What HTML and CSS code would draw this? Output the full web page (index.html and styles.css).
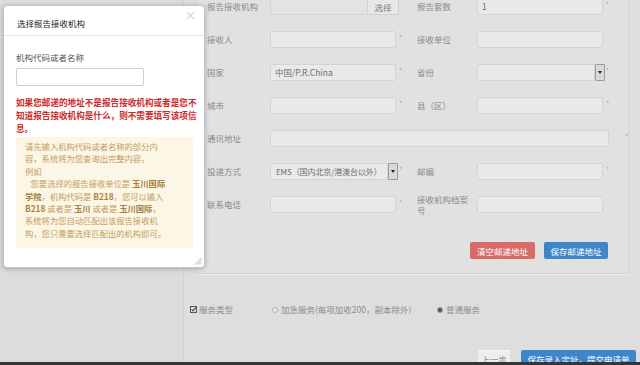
FILE: index.html
```html
<!DOCTYPE html>
<html lang="zh-CN">
<head>
  <meta charset="UTF-8">
  <meta name="viewport" content="width=device-width, initial-scale=1.0">
  <title>邮递地址</title>
  <link rel="stylesheet" href="styles.css">
</head>
<body>
  <div class="page">
    <div class="sidebar"></div>
    <div class="content">
      <div class="panel">
        <div class="form-grid">
          <label class="label">报告接收机构</label>
          <div class="input-group">
            <div class="input disabled"></div>
            <button class="btn-pick" type="button">选择</button>
          </div>
          <span class="star"></span>
          <label class="label">报告套数</label>
          <div class="input">1</div>
          <span class="star red">*</span>

          <label class="label">接收人</label>
          <div class="input"></div>
          <span class="star">*</span>
          <label class="label">接收单位</label>
          <div class="input"></div>
          <span class="star"></span>

          <label class="label">国家</label>
          <div class="input">中国/P.R.China</div>
          <span class="star">*</span>
          <label class="label">省份</label>
          <div class="select wide">
            <div class="select-text"></div>
            <span class="caret"></span>
          </div>
          <span class="star red">*</span>

          <label class="label">城市</label>
          <div class="input"></div>
          <span class="star">*</span>
          <label class="label">县（区）</label>
          <div class="input"></div>
          <span class="star">*</span>

          <label class="label">通讯地址</label>
          <div class="address">
            <div class="input long"></div>
            <span class="star">*</span>
          </div>

          <label class="label">投递方式</label>
          <div class="select">
            <div class="select-text small">EMS（国内北京/港澳台以外）</div>
            <span class="caret"></span>
          </div>
          <span class="star">*</span>
          <label class="label">邮编</label>
          <div class="input"></div>
          <span class="star">*</span>

          <label class="label">联系电话</label>
          <div class="input"></div>
          <span class="star">*</span>
          <label class="label narrow">接收机构档案号</label>
          <div class="input"></div>
          <span class="star"></span>
        </div>
        <div class="panel-actions">
          <button class="btn btn-danger" type="button">清空邮递地址</button>
          <button class="btn btn-primary" type="button">保存邮递地址</button>
        </div>
      </div>

      <div class="service-row">
        <div class="service-label">
          <svg class="check-icon" width="7" height="7" viewBox="0 0 7 7">
            <rect x="0.5" y="0.5" width="6" height="6" fill="none" stroke="#555" stroke-width="1"/>
            <path d="M1.6 3.4 L3 4.8 L6.6 1" fill="none" stroke="#555" stroke-width="1.2"/>
          </svg>
          服务类型
        </div>
        <div class="radio-option first">
          <span class="radio"></span>
          加急服务(每项加收200，副本除外)
        </div>
        <div class="radio-option">
          <span class="radio checked"></span>
          普通服务
        </div>
      </div>

      <div class="steps">
        <button class="btn btn-light" type="button">上一步</button>
        <button class="btn btn-primary btn-submit" type="button">保存录入定址，提交申请单</button>
      </div>
    </div>
  </div>

  <div class="footer-bar"></div>

  <div class="modal">
    <div class="modal-header">
      <h3>选择报告接收机构</h3>
      <span class="close">×</span>
    </div>
    <div class="modal-body">
      <p class="field-label">机构代码或者名称</p>
      <div class="modal-input"></div>
      <p class="warning">如果您邮递的地址不是报告接收机构或者是您不<br>知道报告接收机构是什么，则不需要填写该项信<br>息。</p>
      <div class="hint">
        请先输入机构代码或者名称的部分内<br>
        容，系统将为您查询出完整内容。<br>
        例如<br>
        &nbsp;&nbsp;&nbsp;您要选择的报告接收单位是 <b>玉川国际</b><br>
        <b>学院</b>，机构代码是 <b>B218</b>，您可以输入<br>
        <b>B218</b> 或者是 <b>玉川</b> 或者是 <b>玉川国际</b>，<br>
        系统将为您自动匹配出该报告接收机<br>
        构，您只需要选择匹配出的机构即可。
      </div>
    </div>
    <svg class="resize" width="8" height="8" viewBox="0 0 8 8">
      <path d="M7.5 1 L1 7.5 M7.5 3.5 L3.5 7.5 M7.5 6 L6 7.5" stroke="#999" stroke-width="0.8"/>
    </svg>
  </div>
</body>
</html>
```

FILE: styles.css
```css
* {
  margin: 0;
  padding: 0;
  box-sizing: border-box;
}

body {
  width: 640px;
  height: 365px;
  overflow: hidden;
  background: #dcdcdc;
  font-family: "Noto Sans CJK SC", "Noto Sans", sans-serif;
  font-size: 8.5px;
  color: #8a8a8a;
}

button {
  font-family: inherit;
  font-size: 8.5px;
  border: none;
}

.page {
  display: flex;
  height: 362px;
}

.sidebar {
  width: 183px;
  flex-shrink: 0;
}

.content {
  flex: 1;
  border-left: 1px solid #d2d2d2;
  background: #dedede;
  display: flex;
  flex-direction: column;
}

/* address panel */
.panel {
  margin: -10px 0 0 11px;
  width: 434px;
  background: #e1e1e1;
  border: 1px solid #d3d3d3;
  border-top: none;
  box-shadow: 0 1px 0 #ebebeb;
  padding: 0 0 14px 11px;
}

.form-grid {
  display: grid;
  grid-template-columns: 63px 126px 21px 60px 126px 1fr;
  grid-auto-rows: 33px;
  align-items: center;
}

.label {
  line-height: 11px;
}

.label.narrow {
  max-width: 56px;
}

.input {
  height: 17px;
  background: #e9e9e9;
  border: 1px solid #d4d4d4;
  border-radius: 2px;
  padding: 0 4px;
  line-height: 15px;
  color: #6f6f6f;
}

.input.disabled {
  flex: 1;
  background: #e3e3e3;
  border-radius: 2px 0 0 2px;
}

.input.long {
  width: 339px;
}

.input-group {
  display: flex;
  width: 129px;
}

.btn-pick {
  width: 31px;
  height: 17px;
  background: #e7e7e7;
  border: 1px solid #d0d0d0;
  border-left: none;
  color: #7d7d7d;
}

.address {
  grid-column: 2 / -1;
  display: flex;
  align-items: center;
}

.address .star {
  margin-left: 13px;
}

.star {
  padding-left: 3px;
  font-size: 7px;
  color: #a9a9a9;
  margin-bottom: 5px;
}

.star.red {
  color: #e08a9a;
}

.select {
  display: flex;
  align-items: center;
  width: 128px;
}

.select-text {
  flex: 1;
  height: 17px;
  background: #e9e9e9;
  border: 1px solid #d4d4d4;
  border-radius: 2px 0 0 2px;
  padding-left: 5px;
  line-height: 15px;
  color: #6f6f6f;
  white-space: nowrap;
}

.select-text.small {
  font-size: 8px;
  letter-spacing: -0.1px;
}

.caret {
  width: 10px;
  height: 17px;
  background: #dadada;
  border: 1px solid #9a9a9a;
  border-radius: 1px;
  display: flex;
  align-items: center;
  justify-content: center;
}

.caret::after {
  content: "";
  border-left: 2.5px solid transparent;
  border-right: 2.5px solid transparent;
  border-top: 3px solid #222;
}

.panel-actions {
  display: flex;
  justify-content: flex-end;
  gap: 9px;
  margin-top: 21px;
  padding-right: 20px;
}

.btn {
  height: 17px;
  color: #fff;
  border-radius: 2px;
}

.btn-danger {
  width: 65px;
  background: #d86b68;
}

.btn-primary {
  width: 64px;
  background: #3e86c9;
}

/* service type */
.service-row {
  display: flex;
  align-items: center;
  height: 18px;
  margin-top: 29px;
  padding-left: 6px;
  color: #8c8c8c;
}

.service-label {
  width: 82px;
  display: flex;
  align-items: center;
  gap: 1px;
}

.check-icon {
  margin-right: 1px;
}

.radio-option {
  display: flex;
  align-items: center;
  gap: 3px;
}

.radio-option.first {
  width: 165px;
}

.radio {
  width: 6px;
  height: 6px;
  border: 1px solid #b0b0b0;
  border-radius: 50%;
  background: #eee;
  margin-top: 2px;
}

.radio.checked {
  background: #555;
  border-color: #999;
}

.steps {
  display: flex;
  justify-content: flex-end;
  gap: 11px;
  margin-top: 35px;
  padding-right: 4px;
}

.btn-light {
  width: 32px;
  height: 17px;
  background: #eeeeee;
  color: #8a8a8a;
  border-top: 1px solid #f8f8f8;
}

.btn-submit {
  width: 115px;
  height: 17px;
}

.footer-bar {
  position: fixed;
  left: 0;
  right: 0;
  bottom: 0;
  height: 3px;
  background: #363636;
}

/* modal */
.modal {
  position: absolute;
  left: 3px;
  top: 5px;
  width: 202px;
  height: 263px;
  background: #fff;
  border: 1px solid #c4c4c4;
  border-radius: 4px;
  box-shadow: 0 1px 5px rgba(0, 0, 0, 0.25);
}

.modal-header {
  height: 30px;
  border-bottom: 1px solid #e6e6e6;
  padding: 5px 8px 0 13px;
  display: flex;
  align-items: center;
  justify-content: space-between;
}

.modal-header h3 {
  font-size: 8.5px;
  font-weight: normal;
  color: #222;
}

.close {
  font-size: 11px;
  color: #c2c2c2;
  margin-top: -17px;
}

.modal-body {
  padding: 0 0 0 12px;
}

.field-label {
  margin-top: 15px;
  line-height: 12px;
  color: #555;
}

.modal-input {
  width: 128px;
  height: 18px;
  margin-top: 5px;
  border: 1px solid #cfcfcf;
  border-radius: 2px;
}

.warning {
  margin-top: 10px;
  font-size: 8.6px;
  font-weight: bold;
  line-height: 13px;
  color: #cc2b2b;
  white-space: nowrap;
}

.hint {
  width: 177px;
  height: 111px;
  margin-top: 2px;
  background: #fcf6e6;
  padding: 3px 0 0 9px;
  font-size: 8.3px;
  line-height: 12.4px;
  color: #c39c5e;
  white-space: nowrap;
}

.hint b {
  color: #a87f3f;
}

.resize {
  position: absolute;
  right: 2px;
  bottom: 2px;
}
```
